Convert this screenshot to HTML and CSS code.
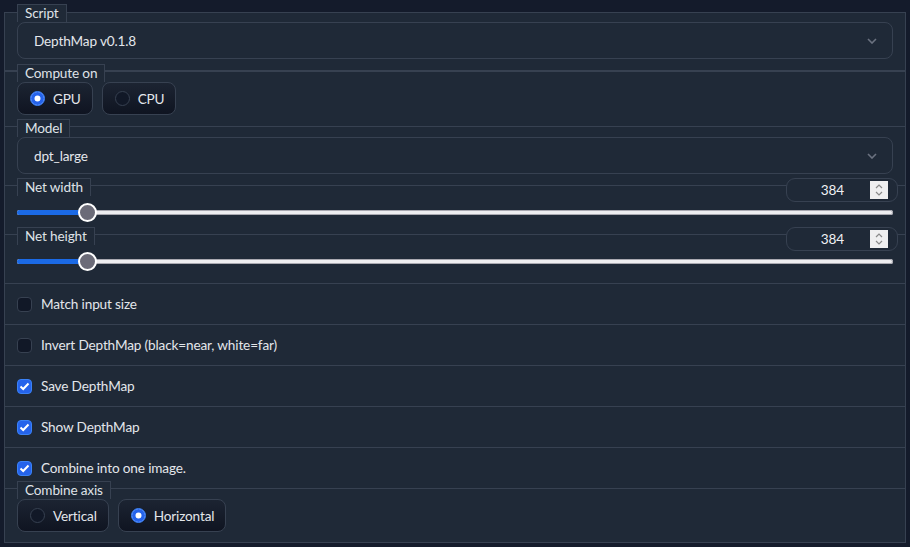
FILE: index.html
```html
<!DOCTYPE html>
<html>
<head>
<meta charset="utf-8">
<link rel="stylesheet" href="styles.css">
</head>
<body>
<div class="page">
  <div class="block script-block">
    <span class="tag">Script</span>
    <div class="dropdown">
      <span>DepthMap v0.1.8</span>
      <svg class="chev" width="10" height="6" viewBox="0 0 10 6"><polyline points="1,1 5,5 9,1" fill="none" stroke="#6b7280" stroke-width="1.6"/></svg>
    </div>
  </div>
  <div class="block main-block">
    <div class="field radio-field first">
      <span class="tag">Compute on</span>
      <div class="radios">
        <label class="radio checked"><span class="dot"></span>GPU</label>
        <label class="radio"><span class="dot"></span>CPU</label>
      </div>
    </div>
    <div class="field model-field">
      <span class="tag">Model</span>
      <div class="dropdown">
        <span>dpt_large</span>
        <svg class="chev" width="10" height="6" viewBox="0 0 10 6"><polyline points="1,1 5,5 9,1" fill="none" stroke="#6b7280" stroke-width="1.6"/></svg>
      </div>
    </div>
    <div class="field slider-field">
      <span class="tag">Net width</span>
      <div class="number">
        <span class="num-val">384</span>
        <span class="spin">
          <svg width="8" height="14" viewBox="0 0 8 14"><polyline points="1,5 4,2 7,5" fill="none" stroke="#8a8a8a" stroke-width="1.2"/><polyline points="1,9 4,12 7,9" fill="none" stroke="#8a8a8a" stroke-width="1.2"/></svg>
        </span>
      </div>
      <div class="slider">
        <div class="track"><div class="fill" style="width: 8.06%"></div></div>
        <div class="thumb" style="left: 8.06%"></div>
      </div>
    </div>
    <div class="field slider-field">
      <span class="tag">Net height</span>
      <div class="number">
        <span class="num-val">384</span>
        <span class="spin">
          <svg width="8" height="14" viewBox="0 0 8 14"><polyline points="1,5 4,2 7,5" fill="none" stroke="#8a8a8a" stroke-width="1.2"/><polyline points="1,9 4,12 7,9" fill="none" stroke="#8a8a8a" stroke-width="1.2"/></svg>
        </span>
      </div>
      <div class="slider">
        <div class="track"><div class="fill" style="width: 8.06%"></div></div>
        <div class="thumb" style="left: 8.06%"></div>
      </div>
    </div>
    <div class="check-row"><span class="box"></span>Match input size</div>
    <div class="check-row"><span class="box"></span>Invert DepthMap (black=near, white=far)</div>
    <div class="check-row"><span class="box on"><svg width="11" height="9" viewBox="0 0 11 9"><polyline points="1.5,4.5 4.2,7 9.5,1.5" fill="none" stroke="#fff" stroke-width="2"/></svg></span>Save DepthMap</div>
    <div class="check-row"><span class="box on"><svg width="11" height="9" viewBox="0 0 11 9"><polyline points="1.5,4.5 4.2,7 9.5,1.5" fill="none" stroke="#fff" stroke-width="2"/></svg></span>Show DepthMap</div>
    <div class="check-row"><span class="box on"><svg width="11" height="9" viewBox="0 0 11 9"><polyline points="1.5,4.5 4.2,7 9.5,1.5" fill="none" stroke="#fff" stroke-width="2"/></svg></span>Combine into one image.</div>
    <div class="field radio-field last">
      <span class="tag">Combine axis</span>
      <div class="radios">
        <label class="radio"><span class="dot"></span>Vertical</label>
        <label class="radio checked"><span class="dot"></span>Horizontal</label>
      </div>
    </div>
  </div>
</div>
</body>
</html>
```
FILE: styles.css
```css
html, body {
  margin: 0;
  padding: 0;
}
body {
  background: #141b2b;
  font-family: "Lato", "Liberation Sans", sans-serif;
  font-size: 13.6px;
  letter-spacing: -0.15px;
  color: #e3e6eb;
  width: 910px;
  height: 547px;
  overflow: hidden;
}
.page {
  padding: 12px 4px 0 4px;
}
.block {
  position: relative;
  background: #1f2937;
  border: 1px solid #374151;
}
.script-block {
  padding: 9px 12px 11px;
}
.tag {
  position: absolute;
  top: -8px;
  left: 12px;
  height: 17px;
  line-height: 16px;
  padding: 0 7px;
  background: #1f2937;
  border: 1px solid #374151;
  border-bottom: none;
  color: #dfe2e7;
  z-index: 2;
}
.script-block .tag {
  top: -9px;
}
.dropdown {
  height: 37px;
  box-sizing: border-box;
  border: 1px solid #374151;
  border-radius: 8px;
  display: flex;
  align-items: center;
  justify-content: space-between;
  padding: 0 15px 0 16px;
}
.chev {
  display: block;
}
.field {
  position: relative;
  border-top: 1px solid #374151;
  padding: 10px 12px 11px;
}
.field.first {
  border-top: none;
}
.field.last {
  padding-bottom: 10px;
}
.radios {
  display: flex;
  gap: 9px;
}
.radio {
  display: flex;
  align-items: center;
  gap: 8px;
  height: 33px;
  box-sizing: border-box;
  padding: 0 11px 0 12px;
  border: 1px solid #374151;
  border-radius: 8px;
  background: linear-gradient(to bottom, #1c2432, #0f1421);
}
.dot {
  width: 15px;
  height: 15px;
  box-sizing: border-box;
  border-radius: 50%;
  border: 1px solid #374151;
  background: #111827;
  flex: none;
}
.radio.checked .dot {
  background: #2563eb;
  border-color: #3b82f6;
  box-shadow: inset 0 0 0 3.5px #2563eb, inset 0 0 0 8px #ffffff;
}
.slider-field {
  padding: 17px 12px 12px;
}
.number {
  position: absolute;
  top: -8px;
  right: 7px;
  width: 112px;
  height: 24px;
  box-sizing: border-box;
  border: 1px solid #374151;
  border-radius: 9px;
  background: #1f2937;
  display: flex;
  align-items: center;
  justify-content: flex-end;
  padding-right: 9px;
  z-index: 2;
}
.num-val {
  margin-right: 26px;
  color: #eef0f3;
}
.spin {
  width: 18px;
  height: 18px;
  background: #efeff0;
  display: flex;
  align-items: center;
  justify-content: center;
}
.slider {
  position: relative;
  height: 19px;
  display: flex;
  align-items: center;
}
.track {
  width: 100%;
  height: 5px;
  border-radius: 3px;
  background: #ededf0;
  box-shadow: inset 0 0 0 1px #a8a8b0;
  overflow: hidden;
}
.fill {
  height: 100%;
  background: #1b6ae6;
}
.thumb {
  position: absolute;
  top: 0;
  width: 19px;
  height: 19px;
  box-sizing: border-box;
  margin-left: -9.5px;
  border-radius: 50%;
  background: #6b6b78;
  border: 2px solid #ffffff;
}
.check-row {
  height: 41px;
  box-sizing: border-box;
  border-top: 1px solid #374151;
  display: flex;
  align-items: center;
  gap: 9px;
  padding: 0 12px;
}
.box {
  width: 15px;
  height: 15px;
  box-sizing: border-box;
  border-radius: 4px;
  border: 1px solid #374151;
  background: #111827;
  display: flex;
  align-items: center;
  justify-content: center;
  flex: none;
}
.box.on {
  background: #2563eb;
  border-color: #3b82f6;
}
.box svg {
  display: block;
}
```
